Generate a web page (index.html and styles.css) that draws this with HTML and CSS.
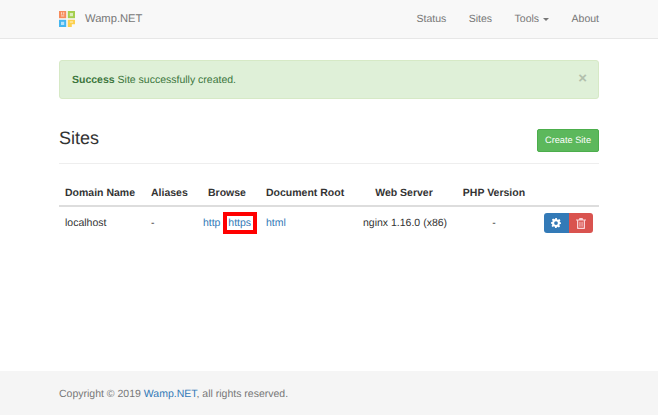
FILE: index.html
```html
<!DOCTYPE html>
<html lang="en">
<head>
<meta charset="utf-8">
<title>Wamp.NET</title>
<link rel="stylesheet" href="styles.css">
</head>
<body>
<nav class="navbar">
  <div class="container navbar-inner">
    <a class="brand" href="#">
      <svg class="logo" width="16" height="16" viewBox="0 0 20 20" aria-hidden="true">
        <rect x="0" y="0" width="9" height="9" fill="#f68b5b"/>
        <rect x="2.500" y="1.500" width="1.400" height="3" fill="#fcd5c0"/><rect x="5.200" y="1.500" width="1.400" height="3" fill="#fcd5c0"/><rect x="2.500" y="5.500" width="4.100" height="1.300" fill="#fcd5c0"/>
        <rect x="11" y="0" width="9" height="9" fill="#a5cf4f"/>
        <rect x="13.500" y="2.500" width="4" height="4" fill="#dcedb8"/>
        <rect x="0" y="11" width="9" height="9" fill="#45b6ef"/>
        <rect x="2.500" y="13.500" width="4" height="4" fill="#b5e2f9"/>
        <path d="M11 11H20V16.500H16V20H11Z" fill="#fcd04f"/>
        <rect x="13.500" y="13" width="4" height="1.500" fill="#feedb8"/>
      </svg>
      <span class="brand-name">Wamp.NET</span>
    </a>
    <ul class="nav">
      <li><a href="#">Status</a></li>
      <li><a href="#">Sites</a></li>
      <li><a href="#">Tools <span class="caret"></span></a></li>
      <li><a href="#">About</a></li>
    </ul>
  </div>
</nav>

<main class="container main">
  <div class="alert">
    <p><strong>Success</strong> Site successfully created.</p>
    <span class="close">×</span>
  </div>

  <div class="page-header">
    <h1>Sites</h1>
    <a class="btn btn-success" href="#">Create Site</a>
  </div>

  <table class="table">
    <colgroup>
      <col class="c1"><col class="c2"><col class="c3"><col class="c4"><col class="c5"><col class="c6"><col class="c7">
    </colgroup>
    <thead>
      <tr>
        <th class="left">Domain Name</th>
        <th class="left">Aliases</th>
        <th>Browse</th>
        <th class="left">Document Root</th>
        <th>Web Server</th>
        <th>PHP Version</th>
        <th></th>
      </tr>
    </thead>
    <tbody>
      <tr>
        <td class="left">localhost</td>
        <td class="left">-</td>
        <td><a href="#">http</a> <a class="outlined" href="#">https</a></td>
        <td class="left"><a href="#">html</a></td>
        <td class="server">nginx 1.16.0 (x86)</td>
        <td>-</td>
        <td>
          <div class="btn-group">
            <a class="icon-btn blue" href="#" aria-label="Settings">
              <svg width="10" height="10" viewBox="0 0 24 24" aria-hidden="true"><path fill="#fff" fill-rule="evenodd" d="M10 0h4l.7 3.400 2.300 1 2.900-1.900 2.800 2.800-1.900 2.900 1 2.300L24 10v4l-3.200.7-1 2.300 1.900 2.900-2.800 2.800-2.900-1.900-2.300 1L13.900 24h-4l-.7-3.200-2.300-1-2.900 1.900-2.800-2.800 1.900-2.900-1-2.300L0 14v-4l3.100-.7 1-2.300-1.900-2.900L5 1.300l2.900 1.900 2.300-1ZM12 7.500a4.500 4.500 0 1 0 0 9 4.500 4.500 0 0 0 0-9Z"/></svg>
            </a>
            <a class="icon-btn red" href="#" aria-label="Delete">
              <svg width="10" height="11" viewBox="0 0 20 22" aria-hidden="true"><path fill="#f9d3d8" fill-rule="evenodd" d="M7 0h6l1.500 3H20v2h-2v15.500a1.500 1.500 0 0 1-1.500 1.500h-13A1.500 1.500 0 0 1 2 20.500V5H0V3h5.500ZM4.500 5v14.500h11V5ZM7 7.500h1.800v10H7Zm4.200 0H13v10h-1.800Z"/></svg>
            </a>
          </div>
        </td>
      </tr>
    </tbody>
  </table>
</main>

<footer class="footer">
  <div class="container">
    <p>Copyright © 2019 <a href="#">Wamp.NET</a>, all rights reserved.</p>
  </div>
</footer>
</body>
</html>
```

FILE: styles.css
```css
* { box-sizing: border-box; }
html, body { height: 100%; }
body {
  margin: 0;
  display: flex;
  flex-direction: column;
  min-height: 415px;
  font-family: "Liberation Sans", Arial, sans-serif;
  font-size: 10.5px;
  line-height: 15px;
  color: #333;
  background: #fff;
  overflow: hidden;
  text-rendering: geometricPrecision;
}
a { color: #337ab7; text-decoration: none; }
.container { width: 540px; margin: 0 auto; }

.navbar {
  height: 39px;
  flex: none;
  background: #f8f8f8;
  border-bottom: 1px solid #e7e7e7;
}
.navbar-inner { display: flex; justify-content: space-between; align-items: center; height: 38px; }
.brand { display: flex; align-items: center; gap: 10px; color: #777; font-size: 11.2px; }
.brand-name { padding-top: 1px; }
.logo { display: block; width: 16px; height: 16px; }
.nav { display: flex; gap: 22.5px; list-style: none; margin: 0; padding: 1px 0 0; }
.nav a { color: #777; }
.caret {
  display: inline-block;
  width: 0; height: 0;
  margin-left: 1px;
  vertical-align: middle;
  border-top: 3px solid #777;
  border-left: 3px solid transparent;
  border-right: 3px solid transparent;
}

.main { flex: 1; padding-top: 21px; }
.alert {
  display: flex;
  justify-content: space-between;
  align-items: center;
  height: 39px;
  padding: 0 11px 0 12px;
  background: #dff0d8;
  border: 1px solid #d6e9c6;
  border-radius: 3px;
  color: #3c763d;
}
.alert p { margin: 1px 0 0; }
.close { font-size: 15px; font-weight: 700; color: #000; opacity: .2; line-height: 1; margin-top: -3px; }

.page-header {
  display: flex;
  justify-content: space-between;
  align-items: flex-start;
  margin-top: 30px;
  padding-bottom: 11px;
  border-bottom: 1px solid #eee;
}
h1 { margin: 0; font-size: 18px; font-weight: 500; line-height: 18px; }
.btn {
  display: block;
  padding: 3px 7px;
  height: 23px;
  border-radius: 2px;
  font-size: 9.2px;
  line-height: 15px;
}
.btn-success { background: #5cb85c; border: 1px solid #4cae4c; color: #fff; }

.table { width: 100%; border-collapse: collapse; table-layout: fixed; margin-top: 16px; }
.c1 { width: 86px; } .c2 { width: 49px; } .c3 { width: 66px; } .c4 { width: 98px; } .c5 { width: 92px; } .c6 { width: 88px; } .c7 { width: 61px; }
th, td { text-align: center; padding: 0 6px; white-space: nowrap; }
th { height: 26px; padding-top: 2px; border-bottom: 2px solid #ddd; font-weight: 700; color: #333; }
td { height: 33px; }
.left { text-align: left; }
.server { padding: 0 9px 0 5px; }
.outlined {
  display: inline-block;
  height: 14px;
  margin: 0 -2px 0 4px;
  padding: 0 2px 0 1px;
  line-height: 14px;
  outline: 4px solid #f00;
}
.btn-group { display: flex; justify-content: flex-end; }
.icon-btn { display: flex; align-items: center; justify-content: center; width: 24.5px; height: 20px; }
.blue { background: #337ab7; border-radius: 3px 0 0 3px; }
.red { background: #d9534f; border-radius: 0 3px 3px 0; }

.footer { height: 44px; flex: none; background: #f5f5f5; display: flex; align-items: center; color: #777; }
.footer p { margin: 2px 0 0; }
```
